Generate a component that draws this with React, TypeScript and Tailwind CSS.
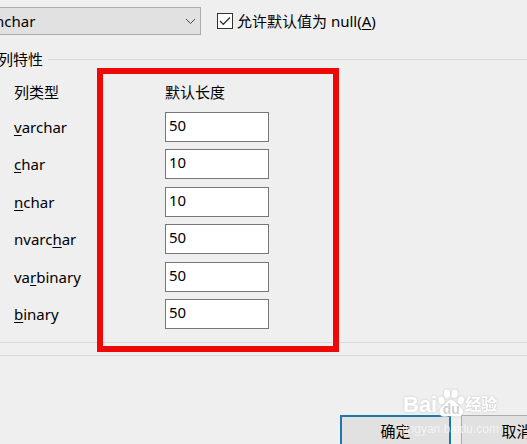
import React, { useState } from "react";
import clsx from "clsx";

interface ColumnType {
    id: string;
    // Label split around its access key
    before: string;
    accessKey: string;
    after: string;
    length: string;
}

const COLUMN_TYPES: ColumnType[] = [
    { id: "varchar", before: "", accessKey: "v", after: "archar", length: "50" },
    { id: "char", before: "", accessKey: "c", after: "har", length: "10" },
    { id: "nchar", before: "", accessKey: "n", after: "char", length: "10" },
    { id: "nvarchar", before: "nvarc", accessKey: "h", after: "ar", length: "50" },
    { id: "varbinary", before: "va", accessKey: "r", after: "binary", length: "50" },
    { id: "binary", before: "", accessKey: "b", after: "inary", length: "50" },
];

const AccessKey: React.FC<{ children: React.ReactNode }> = ({ children }) => (
    <u className="underline decoration-1 underline-offset-2">{children}</u>
);

const TypeSelect = () => (
    <div className="relative -ml-3 w-[213px]">
        <select
            aria-label="默认列类型"
            defaultValue="nchar"
            className="block h-7 w-full appearance-none border border-[#adadad] bg-[#e1e1e1] pl-[6px] text-black"
        >
            {COLUMN_TYPES.map((type) => (
                <option key={type.id} value={type.id}>{type.id}</option>
            ))}
        </select>
        <svg
            className="pointer-events-none absolute right-[5px] top-[11px]"
            width="11"
            height="7"
            viewBox="0 0 11 7"
            fill="none"
            stroke="#444"
        >
            <path d="M1 1l4.5 4.5L10 1" />
        </svg>
    </div>
);

const NullCheckbox = () => {
    const [checked, setChecked] = useState(true);

    return (
        <label className="flex items-center gap-1">
            <span className="relative block size-4">
                <input
                    type="checkbox"
                    checked={checked}
                    onChange={(e) => setChecked(e.target.checked)}
                    className="block size-4 appearance-none border border-[#333] bg-white"
                />
                {checked && (
                    <svg
                        className="pointer-events-none absolute inset-0"
                        width="16"
                        height="16"
                        viewBox="0 0 16 16"
                        fill="none"
                        stroke="#333"
                        strokeWidth="1.3"
                    >
                        <path d="M3 8l3.3 3.3L13 4.5" />
                    </svg>
                )}
            </span>
            <span>允许默认值为 null(<AccessKey>A</AccessKey>)</span>
        </label>
    );
};

const LengthTable = () => {
    const [lengths, setLengths] = useState<Record<string, string>>(
        Object.fromEntries(COLUMN_TYPES.map((type) => [type.id, type.length]))
    );

    return (
        <table className="ml-[22px] border-collapse">
            <thead>
            <tr className="h-8">
                <th className="w-[151px] p-0 text-left align-top font-normal leading-6">列类型</th>
                <th className="p-0 text-left align-top font-normal leading-6">默认长度</th>
            </tr>
            </thead>
            <tbody>
            {COLUMN_TYPES.map((type) => (
                <tr key={type.id} className="odd:h-[37px] even:h-[38px]">
                    <td className="p-0 align-top">
                        <label htmlFor={type.id} className="block leading-[30px]">
                            {type.before}<AccessKey>{type.accessKey}</AccessKey>{type.after}
                        </label>
                    </td>
                    <td className="p-0 align-top">
                        <input
                            id={type.id}
                            type="text"
                            value={lengths[type.id]}
                            onChange={(e) => setLengths({ ...lengths, [type.id]: e.target.value })}
                            className="block h-[30px] w-[104px] border border-[#777] bg-white pb-[5px] pl-[3px] text-black"
                        />
                    </td>
                </tr>
            ))}
            </tbody>
        </table>
    );
};

const DialogButton: React.FC<{ label: string; primary?: boolean }> = ({ label, primary }) => (
    <button
        type="button"
        className={clsx(
            "h-8 w-[111px] shrink-0 bg-[#e1e1e1]",
            primary ? "border-2 border-[#1c79b0]" : "border border-[#adadad]"
        )}
    >
        {label}
    </button>
);

const Watermark = () => (
    <div className="pointer-events-none absolute -top-7 right-7 w-24 font-['Liberation_Sans','Noto_Sans_CJK_SC',sans-serif] text-white">
        <div className="flex h-[30px] items-end [filter:drop-shadow(0_0_1px_#c4c4c4)]">
            <span className="text-[22px] leading-6 font-bold">Bai</span>
            <span className="relative block size-7 shrink-0">
                <svg width="28" height="28" viewBox="0 0 28 28" fill="#fff">
                    <ellipse cx="4.5" cy="11.5" rx="3" ry="4" transform="rotate(-15 4.5 11.5)" />
                    <ellipse cx="10" cy="4.8" rx="3.2" ry="4.3" />
                    <ellipse cx="17.5" cy="4.8" rx="3.2" ry="4.3" transform="rotate(8 17.5 4.8)" />
                    <ellipse cx="24" cy="11.5" rx="3" ry="4" transform="rotate(15 24 11.5)" />
                    <path d="M14 11c-3.5 0-4.5 3-7 5.2C4.500 18.500 2 20 2.500 23.500 3 27 6 28 9 27.500c3.500-.6 6.500-.6 10 0 3.500.5 6.500-.8 7-4 .4-3.500-2.500-5.300-5-7.500C18.500 14 17.500 11 14 11z" />
                </svg>
                <span className="absolute inset-x-0 bottom-0 text-center text-sm leading-4 font-bold text-[#d0d0d0]">du</span>
            </span>
            <span className="text-base leading-6 font-bold whitespace-nowrap">经验</span>
        </div>
        <div className="mt-1 flex justify-end text-xs leading-4 whitespace-nowrap opacity-60">jingyan.baidu.com</div>
    </div>
);

const App = () => (
    <div className="h-screen overflow-hidden bg-[#efefef] pt-[7px] font-['Noto_Sans','Noto_Sans_CJK_SC',sans-serif] text-[15px] leading-6 text-black">
        <div className="border-b border-[#d9d9d9] pb-3">
            <div className="flex items-center gap-4">
                <TypeSelect />
                <NullCheckbox />
            </div>

            <div className="relative mt-3">
                <fieldset className="-ml-2 border-y border-[#d9d9d9] pt-[9px] pb-[5px]">
                    <legend className="pr-[5px] pl-[6px]">列特性</legend>
                    <LengthTable />
                </fieldset>
                {/* Highlight around the length column */}
                <div className="pointer-events-none absolute top-[21px] left-[97px] h-[284px] w-[242px] border-6 border-[#ef0808]" />
            </div>
        </div>

        {/* Dialog buttons */}
        <div className="relative mt-[59px]">
            <div className="-mr-[45px] flex justify-end gap-[10px]">
                <DialogButton label="确定" primary />
                <DialogButton label="取消" />
            </div>
            <Watermark />
        </div>
    </div>
);

export default App;
